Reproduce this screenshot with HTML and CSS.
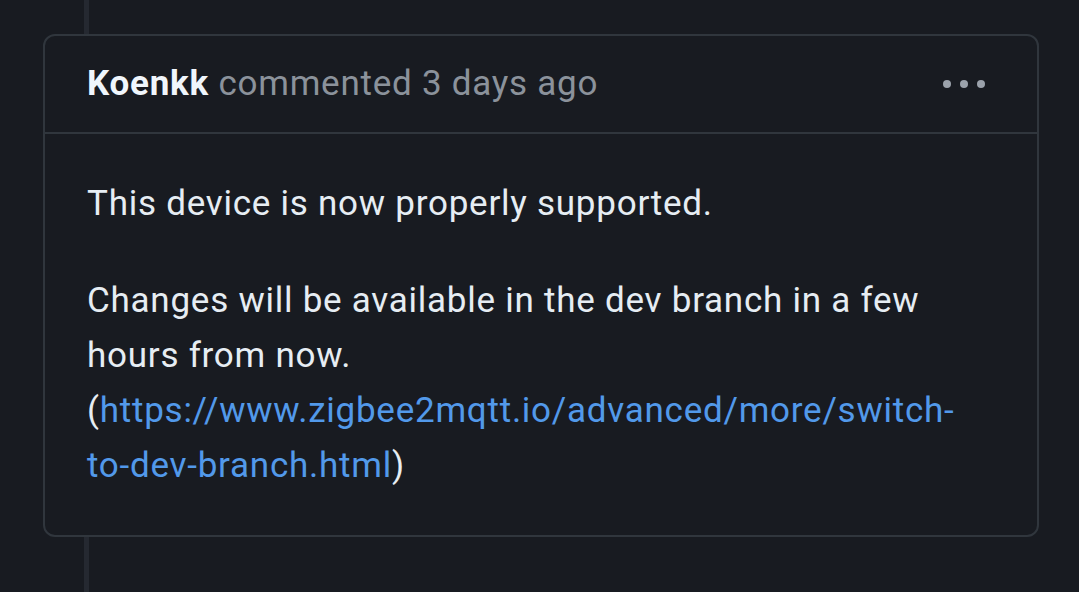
FILE: index.html
```html
<!DOCTYPE html>
<html lang="en">
<head>
<meta charset="utf-8">
<title>Comment</title>
<link rel="stylesheet" href="styles.css">
</head>
<body>
<div class="timeline">
  <div class="comment">
    <div class="comment-header">
      <div class="meta">
        <span class="author">Koenkk</span>
        <span class="when">commented 3 days ago</span>
      </div>
      <button class="more" aria-label="More options">
        <svg width="42" height="8" viewBox="0 0 42 8" aria-hidden="true">
          <circle cx="4" cy="4" r="4"/>
          <circle cx="21" cy="4" r="4"/>
          <circle cx="38" cy="4" r="4"/>
        </svg>
      </button>
    </div>
    <div class="comment-body">
      <p>This device is now properly supported.</p>
      <p>Changes will be available in the dev branch in a few hours from now. (<a href="#">https://www.zigbee2mqtt.io/advanced/more/switch-to-dev-branch.html</a>)</p>
    </div>
  </div>
</div>
</body>
</html>
```

FILE: styles.css
```css
html, body {
  margin: 0;
  padding: 0;
  background: #181b21;
}

body {
  font-family: Roboto, "Noto Sans", sans-serif;
  color: #e6edf3;
}

.timeline {
  box-sizing: border-box;
  height: 592px;
  padding: 34px 40px 0 43px;
  background: linear-gradient(#252931, #252931) no-repeat 84px 0 / 5px 100%;
}

.comment {
  box-sizing: border-box;
  width: 996px;
  height: 503px;
  border: 2px solid #30363d;
  border-radius: 12px;
  background: #181b21;
}

.comment-header {
  box-sizing: border-box;
  height: 98px;
  padding: 0 52px 0 42px;
  display: flex;
  align-items: center;
  justify-content: space-between;
  border-bottom: 2px solid #30363d;
}

.meta {
  font-size: 35px;
  line-height: 40px;
  letter-spacing: 0.75px;
  white-space: nowrap;
}

.author {
  font-weight: 700;
  color: #f0f6fc;
}

.when {
  color: #8b929b;
}

.more {
  border: 0;
  padding: 0;
  margin: 0;
  background: none;
  display: flex;
  fill: #9ba2ab;
}

.comment-body {
  padding: 42px 44px 0 42px;
  font-size: 35px;
  line-height: 55px;
  letter-spacing: 0.75px;
}

.comment-body p {
  margin: 0 0 42px;
}

.comment-body p:last-child {
  margin-bottom: 0;
}

.comment-body a {
  color: #5299ea;
  text-decoration: none;
}
```
